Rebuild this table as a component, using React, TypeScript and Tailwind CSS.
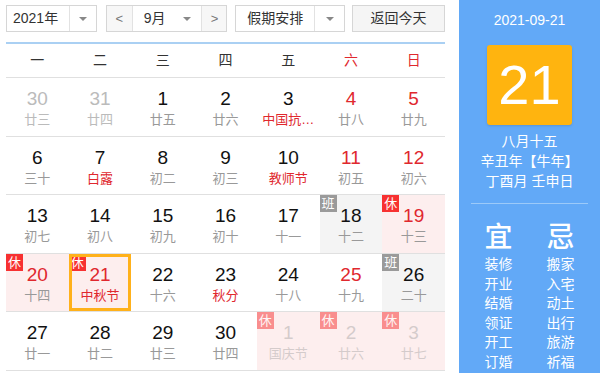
import React from 'react'

type Day = {
  n: number
  lunar: string
  red?: boolean
  fest?: boolean
  dim?: boolean
  badge?: '休' | '班'
  faded?: boolean
  selected?: boolean
}

const weeks: Day[][] = [
  [
    { n: 30, lunar: '廿三', dim: true },
    { n: 31, lunar: '廿四', dim: true },
    { n: 1, lunar: '廿五' },
    { n: 2, lunar: '廿六' },
    { n: 3, lunar: '中国抗…', fest: true },
    { n: 4, lunar: '廿八', red: true },
    { n: 5, lunar: '廿九', red: true },
  ],
  [
    { n: 6, lunar: '三十' },
    { n: 7, lunar: '白露', fest: true },
    { n: 8, lunar: '初二' },
    { n: 9, lunar: '初三' },
    { n: 10, lunar: '教师节', fest: true },
    { n: 11, lunar: '初五', red: true },
    { n: 12, lunar: '初六', red: true },
  ],
  [
    { n: 13, lunar: '初七' },
    { n: 14, lunar: '初八' },
    { n: 15, lunar: '初九' },
    { n: 16, lunar: '初十' },
    { n: 17, lunar: '十一' },
    { n: 18, lunar: '十二', badge: '班' },
    { n: 19, lunar: '十三', red: true, badge: '休' },
  ],
  [
    { n: 20, lunar: '十四', red: true, badge: '休' },
    { n: 21, lunar: '中秋节', red: true, fest: true, badge: '休', selected: true },
    { n: 22, lunar: '十六' },
    { n: 23, lunar: '秋分', fest: true },
    { n: 24, lunar: '十八' },
    { n: 25, lunar: '十九', red: true },
    { n: 26, lunar: '二十', badge: '班' },
  ],
  [
    { n: 27, lunar: '廿一' },
    { n: 28, lunar: '廿二' },
    { n: 29, lunar: '廿三' },
    { n: 30, lunar: '廿四' },
    { n: 1, lunar: '国庆节', badge: '休', faded: true },
    { n: 2, lunar: '廿六', badge: '休', faded: true },
    { n: 3, lunar: '廿七', badge: '休', faded: true },
  ],
]

const yi = ['装修', '开业', '结婚', '领证', '开工', '订婚']
const ji = ['搬家', '入宅', '动土', '出行', '旅游', '祈福']

function Caret() {
  return <span className="inline-block w-0 h-0 border-x-[4px] border-x-transparent border-t-[4px] border-t-[#888]" />
}

function Cell({ d }: { d: Day }) {
  const bg =
    d.badge === '班' ? 'bg-[#f4f4f4]' : d.badge === '休' ? 'bg-[#fdeeee]' : 'bg-white'
  const numColor = d.dim ? 'text-[#bbb]' : d.red ? 'text-[#e0282e]' : 'text-[#111]'
  const lunarColor = d.fest ? 'text-[#e0282e]' : d.dim ? 'text-[#bbb]' : 'text-[#999]'
  return (
    <div className={`relative h-full ${bg}`}>
      <div className={`flex flex-col items-center pt-[9px] ${d.faded ? 'opacity-40' : ''}`}>
        <span className={`text-[19px] leading-[24px] ${d.faded ? 'text-[#999]' : numColor}`}>{d.n}</span>
        <span className={`text-[13px] leading-[18px] ${d.faded ? 'text-[#999]' : lunarColor}`}>{d.lunar}</span>
      </div>
      {d.badge && (
        <span
          className={`absolute left-0 top-0 w-[17px] h-[17px] flex items-center justify-center text-[13px] leading-none text-white ${
            d.badge === '班' ? 'bg-[#9a9a9a]' : 'bg-[#f73131]'
          } ${d.faded ? 'opacity-50' : ''}`}
        >
          {d.badge}
        </span>
      )}
      {d.selected && <div className="absolute inset-0 border-[3px] border-[#ffb11b]" />}
    </div>
  )
}

export default function App() {
  return (
    <div
      className="w-[600px] h-[373px] flex bg-white overflow-hidden text-[#333]"
      style={{ fontFamily: '"Liberation Sans", Arial, "Noto Sans CJK SC", sans-serif' }}
    >
      {/* Calendar */}
      <div className="w-[459px] pl-[6px] pr-[14px]">
        <div className="flex items-center h-[27px] mt-[5px] text-[14px]">
          <div className="flex h-full w-[91px] border border-[#d6d6d6]">
            <span className="flex-1 flex items-center pl-[6px]">2021年</span>
            <span className="w-[27px] border-l border-[#e2e2e2] flex items-center justify-center">
              <Caret />
            </span>
          </div>
          <div className="flex h-full w-[122px] ml-[9px] border border-[#d6d6d6]">
            <span className="w-[26px] bg-[#f7f7f7] border-r border-[#e2e2e2] flex items-center justify-center text-[#777] text-[13px]">&lt;</span>
            <span className="flex-1 flex items-center pl-[11px] pr-[10px] justify-between">
              9月
              <Caret />
            </span>
            <span className="w-[25px] bg-[#f7f7f7] border-l border-[#e2e2e2] flex items-center justify-center text-[#777] text-[13px]">&gt;</span>
          </div>
          <div className="flex h-full w-[110px] ml-[8px] border border-[#d6d6d6]">
            <span className="flex-1 flex items-center justify-center">假期安排</span>
            <span className="w-[30px] border-l border-[#e2e2e2] flex items-center justify-center">
              <Caret />
            </span>
          </div>
          <div className="flex h-full w-[93px] ml-[7px] border border-[#d6d6d6] bg-[#f5f5f5] items-center justify-center">
            返回今天
          </div>
        </div>

        <div className="mt-[10px] h-[2px] bg-[#aad0f3]" />

        <div className="grid grid-cols-7 h-[34px] items-center text-[14px] border-b border-[#e0e0e0]">
          {['一', '二', '三', '四', '五', '六', '日'].map((w, i) => (
            <span key={w} className={`text-center ${i >= 5 ? 'text-[#e0282e]' : 'text-[#333]'}`}>
              {w}
            </span>
          ))}
        </div>

        {weeks.map((row, ri) => (
          <div key={ri} className="grid grid-cols-7 h-[58.6px] border-b border-[#e0e0e0]">
            {row.map((d, ci) => (
              <Cell key={ci} d={d} />
            ))}
          </div>
        ))}
      </div>

      {/* Side panel */}
      <div className="flex-1 bg-[#62a9f7] text-white flex flex-col items-center">
        <div className="mt-[11px] text-[14px] leading-[18px]">2021-09-21</div>
        <div className="mt-[16px] w-[85px] h-[80px] rounded-[3px] bg-[#ffb40f] flex items-center justify-center text-[56px] leading-none shadow-sm">
          21
        </div>
        <div className="mt-[6px] text-[14px] leading-[20px] text-center">
          <div>八月十五</div>
          <div>辛丑年【牛年】</div>
          <div>丁酉月 壬申日</div>
        </div>
        <div className="mt-[12px] w-[117px] h-px bg-[#9ccaf9]" />
        <div className="mt-[17px] flex gap-[34px]">
          {[
            { h: '宜', list: yi },
            { h: '忌', list: ji },
          ].map(c => (
            <div key={c.h} className="flex flex-col items-center w-[28px]">
              <span className="text-[28px] leading-[34px] font-medium">{c.h}</span>
              <div className="mt-0 flex flex-col items-center text-[14px] leading-[19.5px]">
                {c.list.map(t => (
                  <span key={t}>{t}</span>
                ))}
              </div>
            </div>
          ))}
        </div>
      </div>
    </div>
  )
}
